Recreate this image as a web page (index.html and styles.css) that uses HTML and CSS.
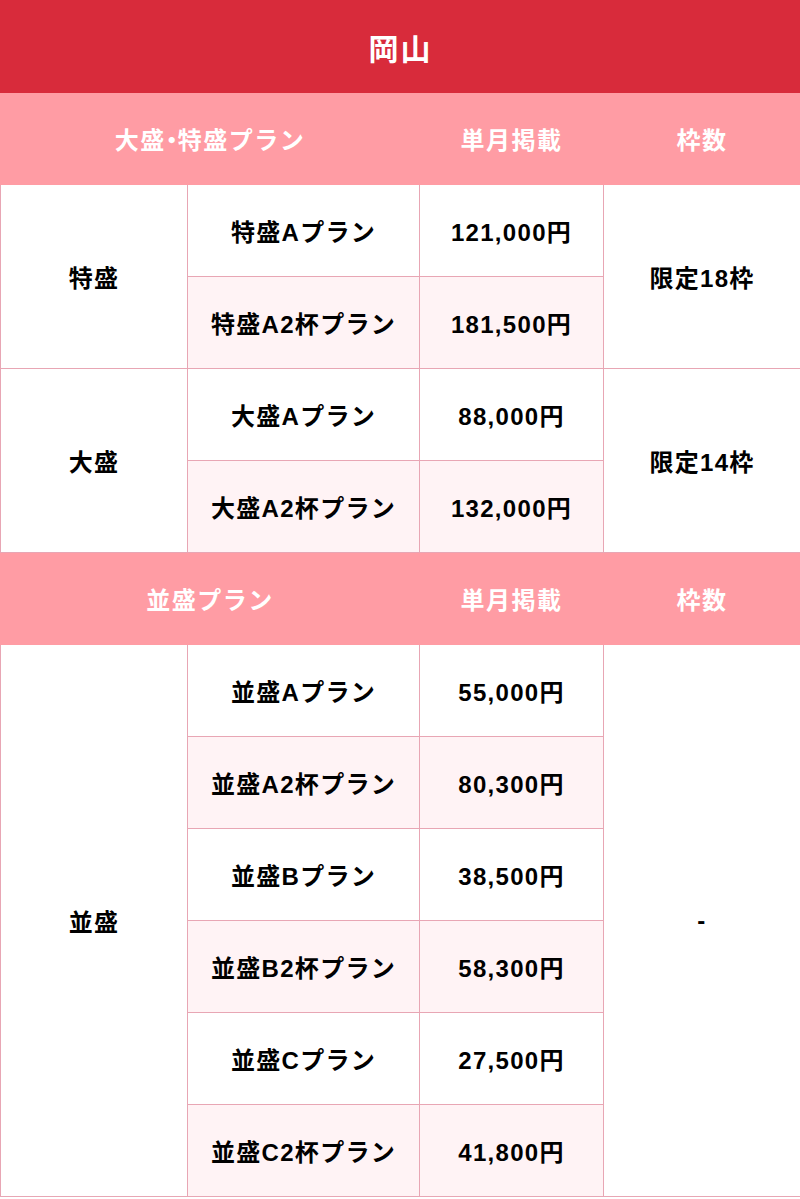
FILE: index.html
```html
<!DOCTYPE html>
<html lang="ja">
<head>
<meta charset="utf-8">
<link rel="stylesheet" href="styles.css">
</head>
<body>
<table class="plan">
  <colgroup>
    <col class="c1"><col class="c2"><col class="c3"><col class="c4">
  </colgroup>
  <tr class="title-row"><th colspan="4" class="title">岡山</th></tr>
  <tr class="head-row">
    <th colspan="2">大盛<span class="dot">・</span>特盛プラン</th>
    <th>単月掲載</th>
    <th>枠数</th>
  </tr>
  <tr>
    <td rowspan="2" class="cat">特盛</td>
    <td>特盛Aプラン</td>
    <td>121,000円</td>
    <td rowspan="2" class="slots">限定18枠</td>
  </tr>
  <tr class="alt">
    <td>特盛A2杯プラン</td>
    <td>181,500円</td>
  </tr>
  <tr>
    <td rowspan="2" class="cat">大盛</td>
    <td>大盛Aプラン</td>
    <td>88,000円</td>
    <td rowspan="2" class="slots">限定14枠</td>
  </tr>
  <tr class="alt">
    <td>大盛A2杯プラン</td>
    <td>132,000円</td>
  </tr>
  <tr class="head-row">
    <th colspan="2">並盛プラン</th>
    <th>単月掲載</th>
    <th>枠数</th>
  </tr>
  <tr>
    <td rowspan="6" class="cat">並盛</td>
    <td>並盛Aプラン</td>
    <td>55,000円</td>
    <td rowspan="6" class="slots">-</td>
  </tr>
  <tr class="alt"><td>並盛A2杯プラン</td><td>80,300円</td></tr>
  <tr><td>並盛Bプラン</td><td>38,500円</td></tr>
  <tr class="alt"><td>並盛B2杯プラン</td><td>58,300円</td></tr>
  <tr><td>並盛Cプラン</td><td>27,500円</td></tr>
  <tr class="alt"><td>並盛C2杯プラン</td><td>41,800円</td></tr>
</table>
</body>
</html>
```
FILE: styles.css
```css
html, body {
  margin: 0;
  padding: 0;
  background: #ffffff;
}
.plan {
  width: 800px;
  border-collapse: collapse;
  table-layout: fixed;
  font-family: "Liberation Sans", "Noto Sans CJK JP", sans-serif;
  font-weight: bold;
  color: #000000;
}
.c1 { width: 187px; }
.c2 { width: 232px; }
.c3 { width: 184px; }
.c4 { width: 197px; }
.plan tr { height: 92px; }
.plan th, .plan td {
  border: 1px solid #e8a6b4;
  text-align: center;
  vertical-align: middle;
  padding: 0;
  font-size: 24px;
  letter-spacing: 1.3px;
}
.title {
  background: #d82b3b;
  color: #ffffff;
  font-size: 30px !important;
  letter-spacing: 2px !important;
  border-color: #d82b3b !important;
}
.head-row th {
  background: #ff9ca4;
  color: #ffffff;
  border-color: #ff9ca4;
  letter-spacing: 1.5px;
}
.dot {
  font-feature-settings: "palt";
  letter-spacing: 0;
}
.alt td {
  background: #fff3f5;
}
.alt td.cat, .alt td.slots { background: #ffffff; }
```
